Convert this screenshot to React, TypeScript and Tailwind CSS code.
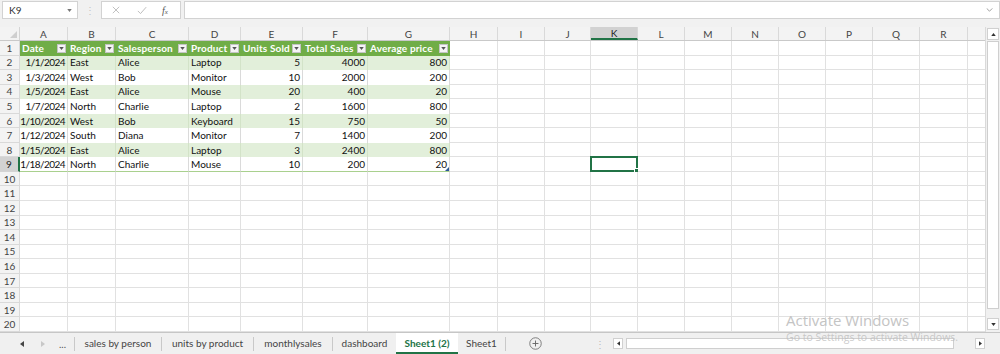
import React from 'react';

// Excel window: formula bar, sheet grid with a green table, sheet tabs.

type Col = { l: string; w: string };

const COLS: Col[] = [
  { l: 'A', w: 'w-[48px]' },
  { l: 'B', w: 'w-[48px]' },
  { l: 'C', w: 'w-[73px]' },
  { l: 'D', w: 'w-[52px]' },
  { l: 'E', w: 'w-[62px]' },
  { l: 'F', w: 'w-[65px]' },
  { l: 'G', w: 'w-[82px]' },
  { l: 'H', w: 'w-[48px]' },
  { l: 'I', w: 'w-[47px]' },
  { l: 'J', w: 'w-[46px]' },
  { l: 'K', w: 'w-[47px]' },
  { l: 'L', w: 'w-[47px]' },
  { l: 'M', w: 'w-[47px]' },
  { l: 'N', w: 'w-[47px]' },
  { l: 'O', w: 'w-[47px]' },
  { l: 'P', w: 'w-[47px]' },
  { l: 'Q', w: 'w-[47px]' },
  { l: 'R', w: 'w-[48px]' },
];

const HEADERS = ['Date', 'Region', 'Salesperson', 'Product', 'Units Sold', 'Total Sales', 'Average price'];

const DATA: (string | number)[][] = [
  ['1/1/2024', 'East', 'Alice', 'Laptop', 5, 4000, 800],
  ['1/3/2024', 'West', 'Bob', 'Monitor', 10, 2000, 200],
  ['1/5/2024', 'East', 'Alice', 'Mouse', 20, 400, 20],
  ['1/7/2024', 'North', 'Charlie', 'Laptop', 2, 1600, 800],
  ['1/10/2024', 'West', 'Bob', 'Keyboard', 15, 750, 50],
  ['1/12/2024', 'South', 'Diana', 'Monitor', 7, 1400, 200],
  ['1/15/2024', 'East', 'Alice', 'Laptop', 3, 2400, 800],
  ['1/18/2024', 'North', 'Charlie', 'Mouse', 10, 200, 20],
];

const ROWS = Array.from({ length: 20 }, (_, i) => i + 1);

function FilterButton() {
  return (
    <div className="mr-[2px] flex h-[9px] w-[9px] shrink-0 items-center justify-center border border-[#c4c4c4] bg-[#f4f4f4]">
      <svg viewBox="0 0 6 4" className="h-[3px] w-[5px]" aria-hidden="true">
        <path d="M0 0h6L3 4z" fill="#555" />
      </svg>
    </div>
  );
}

function TopBar() {
  return (
    <div className="flex h-[27px] shrink-0 items-start gap-0 bg-[#f1f1f1] pt-[1px]">
      <div className="ml-[2px] flex h-[18px] w-[76px] items-center justify-between border border-[#d2d2d2] bg-white pl-[6px] pr-[5px]">
        <span className="text-[10px] text-[#333]">K9</span>
        <svg viewBox="0 0 6 4" className="h-[3px] w-[5px]" aria-hidden="true">
          <path d="M0 0h6L3 4z" fill="#777" />
        </svg>
      </div>
      <div className="flex h-[18px] w-[23px] items-center justify-center text-[10px] leading-none text-[#c4c4c4]">⋮</div>
      <div className="flex h-[18px] w-[80px] items-center border border-[#d2d2d2] bg-white">
        <svg viewBox="0 0 10 10" className="ml-[10px] h-[8px] w-[8px]" aria-hidden="true">
          <path d="M1 1l8 8M9 1l-8 8" stroke="#b8b8b8" strokeWidth="1.1" />
        </svg>
        <svg viewBox="0 0 12 10" className="ml-[17px] h-[9px] w-[10px]" aria-hidden="true">
          <path d="M1 5.5l3.2 3.2L11 1" fill="none" stroke="#b8b8b8" strokeWidth="1.1" />
        </svg>
        <span className="ml-[15px] font-['Liberation_Serif',serif] text-[10px] italic text-[#555]">
          f<span className="text-[7px]">x</span>
        </span>
      </div>
      <div className="ml-[3px] flex h-[18px] flex-1 items-center justify-end border border-[#d2d2d2] bg-white pr-[6px]">
        <svg viewBox="0 0 8 5" className="h-[4px] w-[7px]" aria-hidden="true">
          <path d="M0.5 0.5L4 4l3.5-3.5" fill="none" stroke="#888" strokeWidth="1" />
        </svg>
      </div>
    </div>
  );
}

function HeaderRow() {
  return (
    <div className="flex h-[14px] shrink-0 border-b border-[#c9c9c9] bg-[#f3f3f3]">
      <div className="relative w-[20px] shrink-0 border-r border-[#d4d4d4]">
        <svg viewBox="0 0 8 8" className="absolute bottom-[2px] right-[2px] h-[7px] w-[7px]" aria-hidden="true">
          <path d="M8 0v8H0z" fill="#cfcfcf" />
        </svg>
      </div>
      {COLS.map((c) => (
        <div
          key={c.l}
          className={`${c.w} flex shrink-0 items-center justify-center border-r border-[#d9d9d9] text-[10px] leading-none ${
            c.l === 'K' ? 'border-b-2 border-b-[#217346] bg-[#d2d2d2] text-[#222]' : 'text-[#444]'
          }`}
        >
          {c.l}
        </div>
      ))}
      <div className="flex-1" />
    </div>
  );
}

function Cell({ r, ci, col }: { r: number; ci: number; col: Col }) {
  if (r === 1 && ci < 7) {
    return (
      <div className={`${col.w} flex shrink-0 items-center justify-between overflow-hidden bg-[#70ad47] pl-[2px]`}>
        <span className="whitespace-nowrap text-[10px] font-bold tracking-[0.15px] text-white">{HEADERS[ci]}</span>
        <FilterButton />
      </div>
    );
  }
  if (r >= 2 && r <= 9 && ci < 7) {
    const v = DATA[r - 2][ci];
    const band = r % 2 === 0;
    const right = ci === 0 || ci >= 4;
    return (
      <div
        className={`${col.w} relative flex shrink-0 items-center whitespace-nowrap border-r px-[2px] text-[10px] text-[#111] ${
          right ? 'justify-end' : 'justify-start'
        } ${ci === 0 ? 'tracking-[-0.55px]' : ''} ${band ? 'border-[#d3e3c8] bg-[#e2efda]' : 'border-[#dadada] bg-white'} ${
          r === 9 ? 'border-b border-b-[#a9d08e]' : ''
        }`}
      >
        {v}
        {r === 9 && ci === 6 ? (
          <svg viewBox="0 0 4 4" className="absolute bottom-0 right-0 h-[4px] w-[4px]" aria-hidden="true">
            <path d="M4 0v4H0z" fill="#2b5797" />
          </svg>
        ) : null}
      </div>
    );
  }
  const sel = r === 9 && col.l === 'K';
  return (
    <div className={`${col.w} relative shrink-0 border-b border-r border-[#e1e1e1]`}>
      {sel ? (
        <div className="absolute -left-[1px] -top-[1px] bottom-[-1px] right-[-1px] border-2 border-[#217346]">
          <div className="absolute -bottom-[3px] -right-[3px] h-[5px] w-[5px] border border-white bg-[#217346]" />
        </div>
      ) : null}
    </div>
  );
}

function SheetRow({ r }: { r: number }) {
  const active = r === 9;
  return (
    <div className="flex h-[14.55px] shrink-0">
      <div
        className={`flex w-[20px] shrink-0 items-center justify-center border-b border-r text-[10px] leading-none ${
          active
            ? 'border-b-[#d4d4d4] border-r-2 border-r-[#217346] bg-[#d2d2d2] text-[#222]'
            : 'border-[#d9d9d9] bg-[#f3f3f3] text-[#444]'
        }`}
      >
        {r}
      </div>
      {COLS.map((c, ci) => (
        <Cell key={c.l} r={r} ci={ci} col={c} />
      ))}
      <div className="flex-1 border-b border-[#e1e1e1]" />
    </div>
  );
}

function VScroll() {
  return (
    <div className="flex w-[15px] shrink-0 flex-col items-center border-l border-[#dadada] bg-[#f0f0f0] pt-[1px]">
      <div className="flex h-[12px] w-[12px] items-center justify-center border border-[#d0d0d0] bg-white">
        <svg viewBox="0 0 6 4" className="h-[3px] w-[5px]" aria-hidden="true">
          <path d="M0 4h6L3 0z" fill="#333" />
        </svg>
      </div>
      <div className="mt-[1px] h-[268px] w-[12px] border border-[#cfcfcf] bg-white" />
      <div className="flex-1" />
      <div className="mb-[2px] flex h-[12px] w-[12px] items-center justify-center border border-[#d0d0d0] bg-white">
        <svg viewBox="0 0 6 4" className="h-[3px] w-[5px]" aria-hidden="true">
          <path d="M0 0h6L3 4z" fill="#333" />
        </svg>
      </div>
    </div>
  );
}

function Sep() {
  return <div className="h-[14px] w-px shrink-0 bg-[#c9c9c9]" />;
}

function Tab({ w, label, active }: { w: string; label: string; active?: boolean }) {
  return (
    <div
      className={`${w} flex h-full shrink-0 items-center justify-center whitespace-nowrap text-[10px] ${
        active ? 'border-b-2 border-[#217346] bg-white pt-[1px] font-bold text-[#217346]' : 'text-[#444]'
      }`}
    >
      {label}
    </div>
  );
}

function TabBar() {
  return (
    <div className="flex h-[22px] shrink-0 items-center border-t border-[#c6c6c6] bg-[#f0f0f0]">
      <div className="flex h-full w-[74px] shrink-0 items-center">
        <svg viewBox="0 0 4 6" className="ml-[20px] h-[6px] w-[4px]" aria-hidden="true">
          <path d="M4 0v6L0 3z" fill="#444" />
        </svg>
        <svg viewBox="0 0 4 6" className="ml-[17px] h-[6px] w-[4px]" aria-hidden="true">
          <path d="M0 0v6l4-3z" fill="#c8c8c8" />
        </svg>
        <span className="ml-[14px] text-[10px] leading-none text-[#555]">...</span>
      </div>
      <Sep />
      <Tab w="w-[86px]" label="sales by person" />
      <Sep />
      <Tab w="w-[91px]" label="units by product" />
      <Sep />
      <Tab w="w-[78px]" label="monthlysales" />
      <Sep />
      <Tab w="w-[63px]" label="dashboard" />
      <Tab w="w-[62px]" label="Sheet1 (2)" active />
      <Tab w="w-[47px]" label="Sheet1" />
      <Sep />
      <div className="flex w-[59px] shrink-0 justify-center">
        <svg viewBox="0 0 14 14" className="h-[13px] w-[13px]" aria-hidden="true">
          <circle cx="7" cy="7" r="6.2" fill="none" stroke="#777" strokeWidth="1" />
          <path d="M7 3.8v6.4M3.8 7h6.4" stroke="#666" strokeWidth="1" />
        </svg>
      </div>
      <div className="flex w-[48px] shrink-0 justify-end pr-[8px] text-[10px] leading-none text-[#bbb]">⋮</div>
      <div className="flex h-[12px] w-[373px] shrink-0 items-center">
        <div className="flex h-[11px] w-[10px] items-center justify-center border border-[#d0d0d0] bg-white">
          <svg viewBox="0 0 4 6" className="h-[5px] w-[3px]" aria-hidden="true">
            <path d="M4 0v6L0 3z" fill="#333" />
          </svg>
        </div>
        <div className="ml-[3px] h-[11px] w-[328px] border border-[#cfcfcf] bg-white" />
        <div className="flex-1" />
        <div className="mr-[1px] flex h-[11px] w-[10px] items-center justify-center border border-[#d0d0d0] bg-white">
          <svg viewBox="0 0 4 6" className="h-[5px] w-[3px]" aria-hidden="true">
            <path d="M0 0v6l4-3z" fill="#333" />
          </svg>
        </div>
      </div>
    </div>
  );
}

export default function App() {
  return (
    <div className="relative flex h-[354px] w-[1000px] flex-col overflow-hidden bg-[#f0f0f0] font-['Lato',sans-serif]">
      <TopBar />
      <div className="flex h-[305px] shrink-0">
        <div className="flex w-[985px] shrink-0 flex-col bg-white">
          <HeaderRow />
          {ROWS.map((r) => (
            <SheetRow key={r} r={r} />
          ))}
        </div>
        <VScroll />
      </div>
      <TabBar />
      <div className="pointer-events-none absolute left-[786px] top-[313px] font-['Open_Sans',sans-serif] leading-none">
        <div className="text-[15px] text-[#c4c4c4]">Activate Windows</div>
        <div className="mt-[4px] text-[10.5px] text-[#bdbdbd]/80">Go to Settings to activate Windows.</div>
      </div>
    </div>
  );
}
